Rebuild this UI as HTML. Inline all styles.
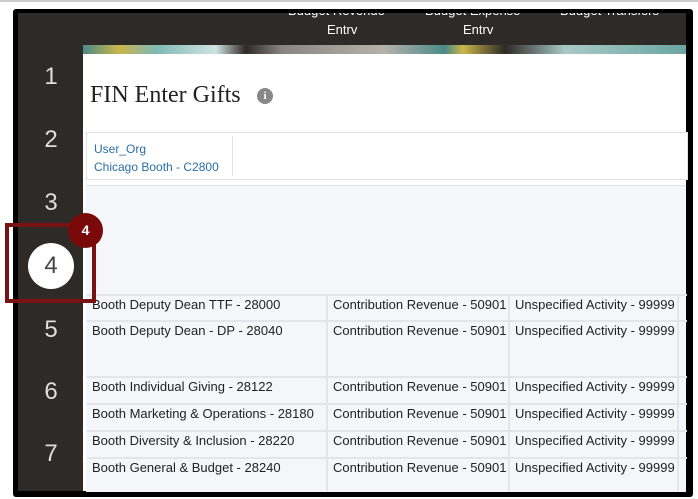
<!DOCTYPE html><html><head><style>
body{margin:0;width:698px;height:499px;background:#fff;position:relative;overflow:hidden;font-family:"Liberation Sans",sans-serif}
.a{position:absolute}
.n{position:absolute;left:38px;width:26px;text-align:center;color:#ddd;font-size:24px;font-weight:300}
.r{position:absolute;left:87px;width:600px;border-top:2px solid #e2e5ea;font-size:13px;color:#222}
.r span{position:absolute;top:1px;white-space:nowrap}
</style></head><body>
<div class="a" style="left:0;top:0;width:698px;height:2px;background:#ccc"></div>
<div class="a" style="left:13px;top:9px;width:680px;height:488px;background:#000;border-radius:3px"></div>
<div class="a" style="left:18px;top:13px;width:668px;height:478px;background:#2e2a27"></div>
<div class="a" style="left:83px;top:13px;width:603px;height:32px;color:#fff;font-size:13px;overflow:hidden">
<div class="a" style="left:205px;top:-10px">Budget Revenue</div><div class="a" style="left:244px;top:9px">Entrv</div>
<div class="a" style="left:342px;top:-10px">Budget Expense</div><div class="a" style="left:380px;top:9px">Entrv</div>
<div class="a" style="left:477px;top:-10px">Budget Transfers</div></div>
<div class="a" style="left:83px;top:45px;width:603px;height:9px;background:linear-gradient(90deg,#4a8a86,#c9b64a 6%,#7fb8b4 12%,#cfe3e1 22%,#2e2a27 27%,#8a8580 33%,#b5b2ac 50%,#4a8a86 60%,#c9b64a 63%,#2e2a27 70%,#a9c9c6 80%,#6aa6a2)"></div>
<div class="a" style="left:83px;top:54px;width:603px;height:437px;background:#fff"></div>
<div class="a" style="left:90px;top:82px;font-family:'Liberation Serif',serif;font-size:24px;color:#222">FIN Enter Gifts</div>
<div class="a" style="left:257px;top:88px;width:16px;height:16px;border-radius:50%;background:#888;color:#fff;font-size:11px;font-weight:bold;text-align:center;line-height:16px;font-family:'Liberation Serif',serif">i</div>
<div class="a" style="left:86px;top:132px;width:600px;height:46px;border:1px solid #dfe3e8;background:#fff"></div>
<div class="a" style="left:232px;top:136px;width:1px;height:40px;background:#e0e0e0"></div>
<div class="a" style="left:94px;top:142px;font-size:12px;color:#2a6fa8">User_Org</div>
<div class="a" style="left:94px;top:160px;font-size:12px;color:#2a6fa8">Chicago Booth - C2800</div>
<div class="a" style="left:86px;top:185px;width:600px;height:306px;background:#f4f6fa;border-top:1px solid #dfe3e8"></div>
<div class="r" style="top:294px;height:25px"><span style="left:5px">Booth Deputy Dean TTF - 28000</span><span style="left:246px">Contribution Revenue - 50901</span><span style="left:428px">Unspecified Activity - 99999</span></div>
<div class="r" style="top:320px;height:55px"><span style="left:5px">Booth Deputy Dean - DP - 28040</span><span style="left:246px">Contribution Revenue - 50901</span><span style="left:428px">Unspecified Activity - 99999</span></div>
<div class="r" style="top:376px;height:26px"><span style="left:5px">Booth Individual Giving - 28122</span><span style="left:246px">Contribution Revenue - 50901</span><span style="left:428px">Unspecified Activity - 99999</span></div>
<div class="r" style="top:403px;height:26px"><span style="left:5px">Booth Marketing &amp; Operations - 28180</span><span style="left:246px">Contribution Revenue - 50901</span><span style="left:428px">Unspecified Activity - 99999</span></div>
<div class="r" style="top:430px;height:26px"><span style="left:5px">Booth Diversity &amp; Inclusion - 28220</span><span style="left:246px">Contribution Revenue - 50901</span><span style="left:428px">Unspecified Activity - 99999</span></div>
<div class="r" style="top:457px;height:34px"><span style="left:5px">Booth General &amp; Budget - 28240</span><span style="left:246px">Contribution Revenue - 50901</span><span style="left:428px">Unspecified Activity - 99999</span></div>
<div class="a" style="left:326px;top:294px;width:2px;height:197px;background:#e2e5ea"></div>
<div class="a" style="left:508px;top:294px;width:2px;height:197px;background:#e2e5ea"></div>
<div class="a" style="left:677px;top:294px;width:2px;height:197px;background:#e2e5ea"></div>
<div class="n" style="top:63px">1</div><div class="n" style="top:126px">2</div><div class="n" style="top:189px">3</div>
<div class="n" style="top:316px">5</div><div class="n" style="top:378px">6</div><div class="n" style="top:440px">7</div>
<div class="a" style="left:28px;top:243px;width:46px;height:46px;border-radius:50%;background:#fff;color:#444;font-size:24px;text-align:center;line-height:46px;font-weight:300">4</div>
<div class="a" style="left:5px;top:223px;width:83px;height:72px;border:4px solid #7a1214"></div>
<div class="a" style="left:68px;top:213px;width:35px;height:35px;border-radius:50%;background:#7a0a0a;color:#fff;font-weight:bold;font-size:14px;text-align:center;line-height:35px">4</div>
</body></html>
